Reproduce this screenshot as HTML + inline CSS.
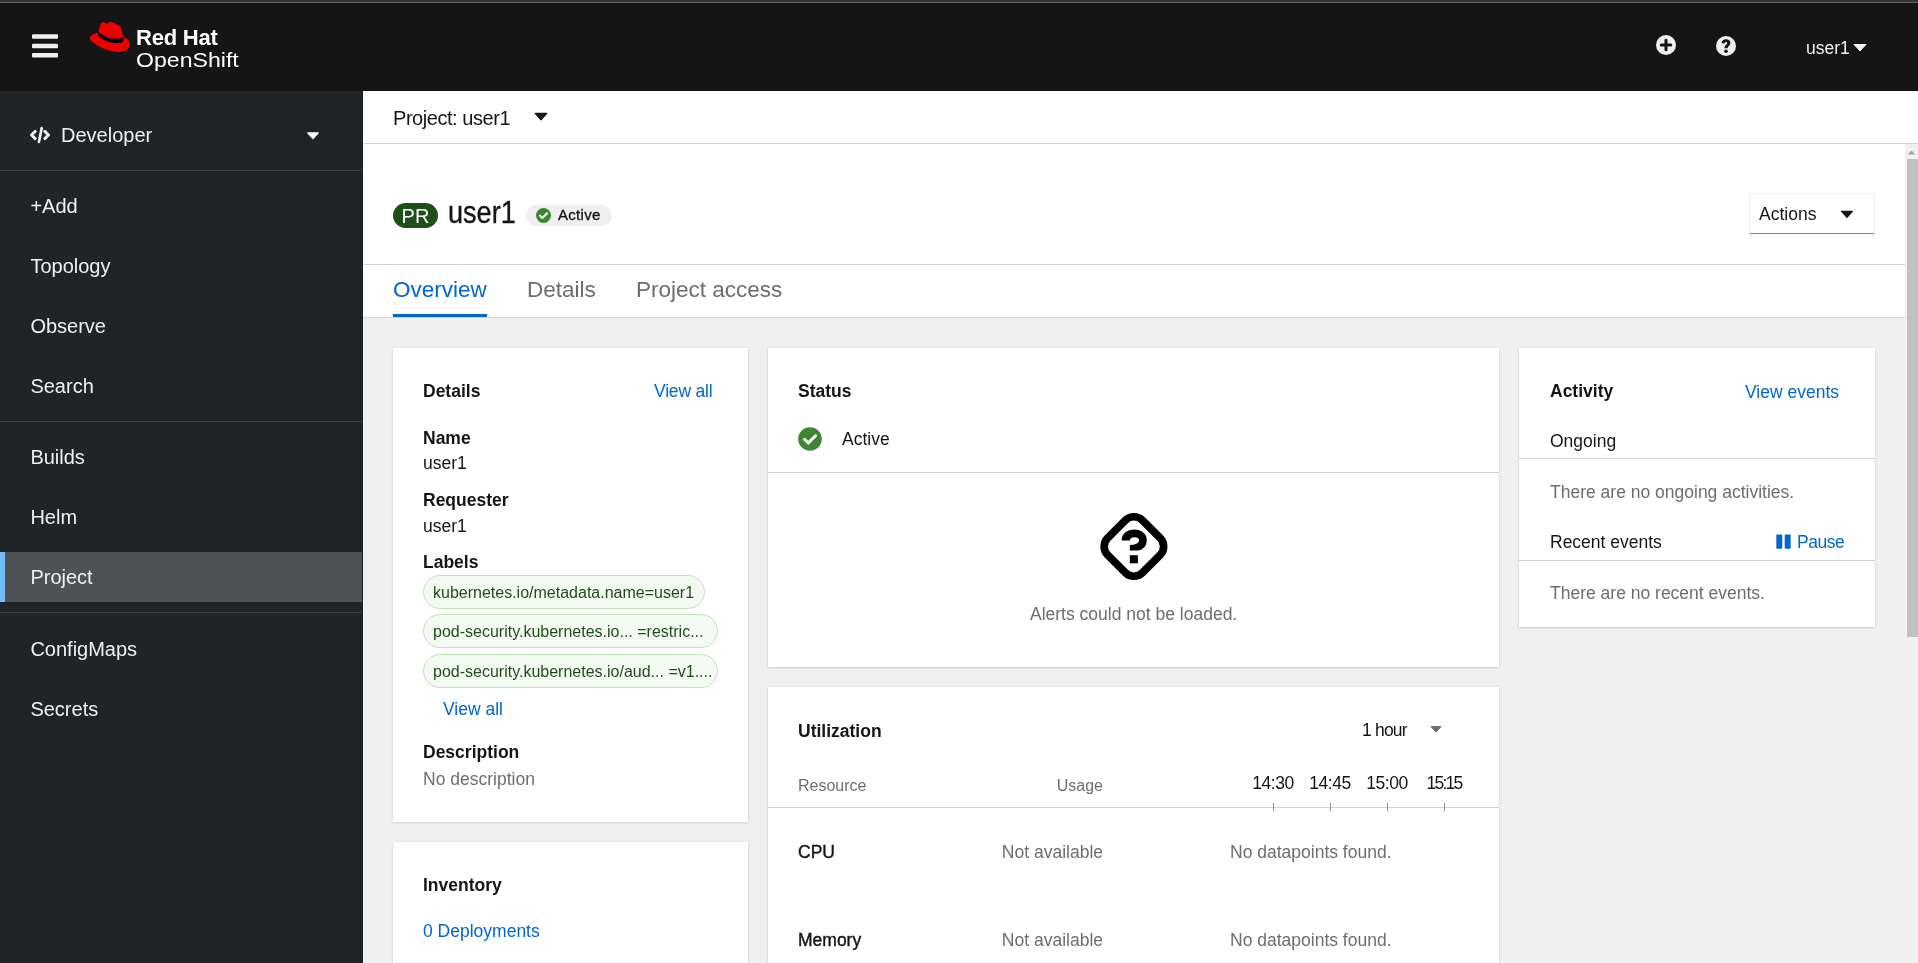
<!DOCTYPE html>
<html><head><meta charset="utf-8">
<style>
*{box-sizing:border-box;margin:0;padding:0}
html,body{width:1918px;height:963px;overflow:hidden;background:#f0f0f0;font-family:"Liberation Sans",sans-serif;color:#151515}
.a{position:absolute;white-space:nowrap;line-height:20px}
body{will-change:transform}
#top{position:absolute;left:0;top:0;width:1918px;height:91px;background:#151515}
#side{position:absolute;left:0;top:91px;width:363px;height:872px;background:#212427}
.nav{position:absolute;left:30.4px;font-size:20px;color:#f0f0f0;line-height:20px}
.sep{position:absolute;left:0;width:362px;height:1px;background:#3c3f42}
#main{position:absolute;left:363px;top:91px;width:1555px;height:872px;background:#f0f0f0}
.card{position:absolute;background:#fff;box-shadow:0 1.25px 2.5px 0 rgba(3,3,3,.12),0 0 2.5px 0 rgba(3,3,3,.06)}
.t17{font-size:17.5px}
.b{font-weight:bold}
.g{color:#6a6e73}
.l{color:#0066cc}
.hl{position:absolute;height:1px;background:#d2d2d2}
.pill{position:absolute;left:423px;height:34px;border:1px solid #bde5b8;background:#f3faf2;border-radius:17px;color:#1e4f18;font-size:16px;line-height:34px;padding-left:9px;white-space:nowrap}
</style></head><body>
<!-- masthead -->
<div id="top"></div>
<div class="a" style="left:0;top:0;width:1918px;height:2px;background:#383838"></div>
<div class="a" style="left:0;top:2px;width:1918px;height:1px;background:#666"></div>
<div class="a" style="left:0;top:3px;width:1918px;height:1px;background:#111"></div>
<svg class="a" style="left:0;top:0" width="80" height="80" viewBox="0 0 80 80">
 <rect x="32" y="34.2" width="26" height="4.6" rx="1" fill="#f0f0f0"/>
 <rect x="32" y="43.8" width="26" height="4.4" rx="1" fill="#f0f0f0"/>
 <rect x="32" y="53" width="26" height="4.6" rx="1" fill="#f0f0f0"/>
</svg>
<svg class="a" style="left:86px;top:18px" width="48" height="38" viewBox="0 0 48 38">
 <path fill="#ee0000" d="M16.6,4.3 C18.5,3.6 20.5,5.5 21.3,5.9 C22.2,4.5 23.5,3.8 24.5,3.9 C27,4.3 31.5,6.2 33.6,7.9 C35.5,9.5 35.8,12 36.2,14 L37.2,19.2 C38,19.4 38.6,19.5 39.1,19.7 C42.5,21.2 44.2,24 43.8,27 C43.5,30.5 40.5,33.8 33,34 C26,34.2 17,31 10,26.5 C5.5,23.8 3.5,21.8 3.9,19.6 C4.3,17.3 8,15.6 12.2,14.5 L13,11.5 C13.8,8.5 14.6,5.2 16.6,4.3 Z"/>
 <path fill="#000" d="M12.2,13.6 C16,17 20,19.5 25,20.3 C30,21 34.5,20.5 37,19.3 L37.6,22.6 C37.5,24.3 35,25.1 30.5,25.1 C24,25.1 17.5,22.6 13,18.6 C12.3,17.6 12,15 12.2,13.6 Z"/>
</svg>
<div class="a b" style="left:136px;top:27.6px;font-size:22px;color:#fff;letter-spacing:-0.2px">Red Hat</div>
<div class="a" style="left:136px;top:49.8px;font-size:21px;color:#fff;transform:scaleX(1.1);transform-origin:0 0">OpenShift</div>
<svg class="a" style="left:1656px;top:35px" width="20" height="20" viewBox="0 0 20 20">
 <circle cx="10" cy="10" r="10" fill="#f0f0f0"/>
 <path d="M10,5.2 V14.8 M5.2,10 H14.8" stroke="#151515" stroke-width="3" stroke-linecap="round" fill="none"/>
</svg>
<svg class="a" style="left:1716px;top:36px" width="20" height="20" viewBox="0 0 20 20">
 <circle cx="10" cy="10" r="10" fill="#f0f0f0"/>
 <path d="M5.6,7.3 C5.6,4.6 7.6,3.2 10.1,3.2 C12.6,3.2 14.4,4.7 14.4,6.9 C14.4,9.6 11.6,10 11.6,12.2 L8.5,12.2 C8.5,9 11.2,8.7 11.2,7.1 C11.2,6.4 10.7,6 10,6 C9.2,6 8.7,6.6 8.7,7.4 Z" fill="#151515"/>
 <circle cx="10.05" cy="15.2" r="1.8" fill="#151515"/>
</svg>
<div class="a t17" style="left:1806px;top:38.2px;color:#f0f0f0">user1</div>
<svg class="a" style="left:1853px;top:43.8px" width="14" height="8" viewBox="0 0 14 8"><path d="M1,0.5 H13 L7,7 Z" fill="#f0f0f0" stroke="#f0f0f0" stroke-width="1" stroke-linejoin="round"/></svg>

<!-- sidebar -->
<div id="side"></div>
<div class="a" style="left:362px;top:91px;width:1px;height:872px;background:#1c1e21"></div>
<svg class="a" style="left:29px;top:126px" width="22" height="18" viewBox="0 0 22 18">
 <path d="M6.2,5.4 L2.5,9 L6.2,12.6" fill="none" stroke="#f0f0f0" stroke-width="2.9" stroke-linejoin="round" stroke-linecap="round"/>
 <path d="M15.8,5.4 L19.5,9 L15.8,12.6" fill="none" stroke="#f0f0f0" stroke-width="2.9" stroke-linejoin="round" stroke-linecap="round"/>
 <path d="M12.7,2.2 L9.9,15.9" fill="none" stroke="#f0f0f0" stroke-width="2.7" stroke-linecap="round"/>
</svg>
<div class="nav" style="left:61px;top:125px">Developer</div>
<svg class="a" style="left:306px;top:131px" width="14" height="9" viewBox="0 0 14 9"><path d="M1.7,1.9 H12.3 L7,7.7 Z" fill="#fff" stroke="#fff" stroke-width="1.1" stroke-linejoin="round"/></svg>
<div class="sep" style="top:170px"></div>
<div class="nav" style="top:196px">+Add</div>
<div class="nav" style="top:256px">Topology</div>
<div class="nav" style="top:316px">Observe</div>
<div class="nav" style="top:376px">Search</div>
<div class="sep" style="top:421px"></div>
<div class="nav" style="top:447px">Builds</div>
<div class="nav" style="top:507px">Helm</div>
<div class="a" style="left:0;top:552px;width:362px;height:50px;background:#4f5255"></div>
<div class="a" style="left:0;top:552px;width:5px;height:50px;background:#73bcf7"></div>
<div class="nav" style="top:567px">Project</div>
<div class="sep" style="top:612px"></div>
<div class="nav" style="top:639px">ConfigMaps</div>
<div class="nav" style="top:699px">Secrets</div>

<!-- main -->
<div id="main"></div>
<div class="a" style="left:363px;top:91px;width:1555px;height:226px;background:#fff"></div>
<div class="hl" style="left:363px;top:143px;width:1555px"></div>
<div class="hl" style="left:363px;top:264px;width:1542px"></div>
<div class="hl" style="left:363px;top:317px;width:1542px"></div>
<div class="a" style="left:393px;top:107.5px;font-size:20px;letter-spacing:-0.45px">Project: user1</div>
<svg class="a" style="left:534px;top:112px" width="14" height="9" viewBox="0 0 14 9"><path d="M1.2,1.4 H12.8 L7,7.8 Z" fill="#151515" stroke="#151515" stroke-width="1.2" stroke-linejoin="round"/></svg>

<div class="a" style="left:393px;top:203px;width:45px;height:25px;border-radius:13px;background:#1e4f18"></div>
<div class="a" style="left:393px;top:206px;width:45px;text-align:center;font-size:20px;color:#fff;line-height:20px">PR</div>
<div class="a" style="left:447.5px;top:202.2px;font-size:31.5px;transform:scaleX(0.86);transform-origin:0 0;-webkit-text-stroke:0.35px #151515">user1</div>
<div class="a" style="left:526px;top:205px;width:86px;height:21px;border-radius:11px;background:#f0f0f0"></div>
<svg class="a" style="left:536px;top:208px" width="15" height="15" viewBox="0 0 15 15"><circle cx="7.5" cy="7.5" r="7.5" fill="#3e8635"/><path d="M3.9,7.6 L6.4,10 L11.1,5.3" fill="none" stroke="#fff" stroke-width="2" stroke-linecap="round" stroke-linejoin="round"/></svg>
<div class="a" style="left:558px;top:205px;font-size:15px;letter-spacing:0.3px;-webkit-text-stroke:0.35px #151515">Active</div>

<div class="a" style="left:1749px;top:193px;width:126px;height:41px;border:1px solid #f0f0f0;border-bottom-color:#8a8d90"></div>
<div class="a t17" style="left:1759px;top:203.9px">Actions</div>
<svg class="a" style="left:1840px;top:210px" width="14" height="9" viewBox="0 0 14 9"><path d="M1.6,1.4 H12.4 L7,7.4 Z" fill="#151515" stroke="#151515" stroke-width="1.2" stroke-linejoin="round"/></svg>

<div class="a" style="left:393px;top:279.6px;font-size:22.5px;color:#0066cc">Overview</div>
<div class="a" style="left:527px;top:279.6px;font-size:22.5px;color:#6a6e73">Details</div>
<div class="a" style="left:636px;top:279.6px;font-size:22.5px;color:#6a6e73">Project access</div>
<div class="a" style="left:393px;top:314px;width:94px;height:3px;background:#0066cc"></div>

<!-- scrollbar -->
<div class="a" style="left:1905px;top:144px;width:13px;height:819px;background:#f1f1f1"></div>
<div class="a" style="left:1907px;top:159px;width:11px;height:478px;background:#c1c1c1"></div>
<svg class="a" style="left:1905px;top:148px" width="13" height="8" viewBox="0 0 13 8"><path d="M2.5,6.5 H10.5 L6.5,2.5 Z" fill="#a3a3a3"/></svg>

<!-- cards -->
<div class="card" style="left:393px;top:348px;width:355px;height:474px"></div>
<div class="card" style="left:393px;top:842px;width:355px;height:200px"></div>
<div class="card" style="left:768px;top:348px;width:731px;height:319px"></div>
<div class="card" style="left:768px;top:687px;width:731px;height:400px"></div>
<div class="card" style="left:1519px;top:348px;width:356px;height:279px"></div>

<!-- details card -->
<div class="a t17 b" style="left:423px;top:381px">Details</div>
<div class="a t17 l" style="left:654px;top:381px;letter-spacing:-0.2px">View all</div>
<div class="a t17 b" style="left:423px;top:427.5px">Name</div>
<div class="a t17" style="left:423px;top:453px">user1</div>
<div class="a t17 b" style="left:423px;top:489.7px">Requester</div>
<div class="a t17" style="left:423px;top:516px">user1</div>
<div class="a t17 b" style="left:423px;top:552px">Labels</div>
<div class="pill" style="top:575px;width:282px">kubernetes.io/metadata.name=user1</div>
<div class="pill" style="top:614px;width:295px">pod-security.kubernetes.io... =restric...</div>
<div class="pill" style="top:654px;width:295px">pod-security.kubernetes.io/aud... =v1....</div>
<div class="a t17 l" style="left:443px;top:699px">View all</div>
<div class="a t17 b" style="left:423px;top:742px">Description</div>
<div class="a t17 g" style="left:423px;top:768.7px">No description</div>

<div class="a t17 b" style="left:423px;top:875px">Inventory</div>
<div class="a t17 l" style="left:423px;top:921px">0 Deployments</div>

<!-- status card -->
<div class="a t17 b" style="left:798px;top:381px">Status</div>
<svg class="a" style="left:798px;top:427px" width="24" height="24" viewBox="0 0 24 24"><circle cx="12" cy="12" r="11.8" fill="#3e8635"/><path d="M6.5,12.3 L10.3,16 L17.5,8.8" fill="none" stroke="#fff" stroke-width="3" stroke-linecap="round" stroke-linejoin="round"/></svg>
<div class="a t17" style="left:842px;top:428.7px">Active</div>
<div class="hl" style="left:768px;top:472px;width:731px"></div>
<svg class="a" style="left:1095px;top:508px" width="78" height="78" viewBox="0 0 78 78">
 <rect x="14.35" y="13.95" width="49.1" height="49.1" rx="12" transform="rotate(45 38.9 38.5)" fill="none" stroke="#000" stroke-width="7.7"/>
 <path d="M26.7,32.4 C26.7,25.5 32.3,21.5 39.3,21.5 C46.5,21.5 51.8,25.8 51.8,32 C51.8,38.5 47.5,42.3 42.2,42.5 L34.8,42.5 L34.8,36.9 C40,36.9 44.1,35.2 44.1,32.2 C44.1,30.3 42,29.2 39.3,29.2 C36.5,29.2 34.8,30.5 34.8,32.4 Z" fill="#000"/>
 <rect x="34.8" y="47.2" width="8.1" height="8.1" fill="#000"/>
</svg>
<div class="a t17 g" style="left:1030px;top:604px">Alerts could not be loaded.</div>

<!-- utilization card -->
<div class="a t17 b" style="left:798px;top:720.5px">Utilization</div>
<div class="a t17" style="left:1362px;top:720px;letter-spacing:-0.8px">1 hour</div>
<svg class="a" style="left:1429px;top:725px" width="14" height="9" viewBox="0 0 14 9"><path d="M2,1.6 H12 L7,7.2 Z" fill="#6a6e73" stroke="#6a6e73" stroke-width="1" stroke-linejoin="round"/></svg>
<div class="a g" style="left:798px;top:776px;font-size:16px">Resource</div>
<div class="a g" style="left:1003px;top:776px;width:100px;text-align:right;font-size:16px">Usage</div>
<div class="a t17" style="left:1242px;top:773.3px;width:62px;text-align:center;letter-spacing:-0.5px">14:30</div>
<div class="a t17" style="left:1299px;top:773.3px;width:62px;text-align:center;letter-spacing:-0.5px">14:45</div>
<div class="a t17" style="left:1356px;top:773.3px;width:62px;text-align:center;letter-spacing:-0.5px">15:00</div>
<div class="a t17" style="left:1413px;top:773.3px;width:62px;text-align:center;letter-spacing:-1.8px">15:15</div>
<div class="hl" style="left:768px;top:807px;width:731px"></div>
<div class="a" style="left:1273px;top:803px;width:1px;height:8px;background:#8a8d90"></div>
<div class="a" style="left:1330px;top:803px;width:1px;height:8px;background:#8a8d90"></div>
<div class="a" style="left:1387px;top:803px;width:1px;height:8px;background:#8a8d90"></div>
<div class="a" style="left:1444px;top:803px;width:1px;height:8px;background:#8a8d90"></div>
<div class="a t17" style="left:798px;top:842px;-webkit-text-stroke:0.4px #151515">CPU</div>
<div class="a t17 g" style="left:953px;top:842px;width:150px;text-align:right">Not available</div>
<div class="a t17 g" style="left:1230px;top:842px">No datapoints found.</div>
<div class="a t17" style="left:798px;top:930px;-webkit-text-stroke:0.4px #151515">Memory</div>
<div class="a t17 g" style="left:953px;top:930px;width:150px;text-align:right">Not available</div>
<div class="a t17 g" style="left:1230px;top:930px">No datapoints found.</div>

<!-- activity card -->
<div class="a t17 b" style="left:1550px;top:381px">Activity</div>
<div class="a t17 l" style="left:1689px;top:381.5px;width:150px;text-align:right">View events</div>
<div class="a t17" style="left:1550px;top:431.4px">Ongoing</div>
<div class="hl" style="left:1519px;top:458px;width:356px"></div>
<div class="a t17 g" style="left:1550px;top:482px">There are no ongoing activities.</div>
<div class="a t17" style="left:1550px;top:532px">Recent events</div>
<svg class="a" style="left:1776px;top:534px" width="16" height="16" viewBox="0 0 16 16"><rect x="0.3" y="0.6" width="6" height="14.2" rx="1" fill="#0066cc"/><rect x="8.7" y="0.6" width="6" height="14.2" rx="1" fill="#0066cc"/></svg>
<div class="a t17 l" style="left:1797px;top:532px;letter-spacing:-0.5px">Pause</div>
<div class="hl" style="left:1519px;top:560px;width:356px"></div>
<div class="a t17 g" style="left:1550px;top:583px">There are no recent events.</div>
</body></html>
